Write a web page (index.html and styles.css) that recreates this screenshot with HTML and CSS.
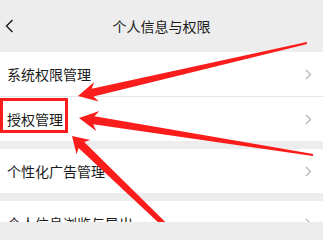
FILE: index.html
```html
<!DOCTYPE html>
<html lang="zh-CN">
<head>
<meta charset="utf-8">
<title>个人信息与权限</title>
<link rel="stylesheet" href="styles.css">
</head>
<body>
<div class="page">
  <header class="nav">
    <span class="back">
      <svg width="10" height="14" viewBox="0 0 10 14"><path d="M7.5 1 L1.5 7 L7.5 13" fill="none" stroke="#1a1a1a" stroke-width="1.4"/></svg>
    </span>
    <h1 class="title">个人信息与权限</h1>
    <span class="spacer"></span>
  </header>

  <section class="group">
    <div class="row"><span class="label">系统权限管理</span><svg class="chev" width="7" height="11" viewBox="0 0 7 11"><path d="M1 1 L5.5 5.5 L1 10" fill="none" stroke="#b2b2b2" stroke-width="1.2"/></svg></div>
    <div class="row divided"><span class="label">授权管理</span><svg class="chev" width="7" height="11" viewBox="0 0 7 11"><path d="M1 1 L5.5 5.5 L1 10" fill="none" stroke="#b2b2b2" stroke-width="1.2"/></svg></div>
  </section>

  <section class="group">
    <div class="row"><span class="label">个性化广告管理</span><svg class="chev" width="7" height="11" viewBox="0 0 7 11"><path d="M1 1 L5.5 5.5 L1 10" fill="none" stroke="#b2b2b2" stroke-width="1.2"/></svg></div>
  </section>

  <section class="group">
    <div class="row"><span class="label">个人信息浏览与导出</span><svg class="chev" width="7" height="11" viewBox="0 0 7 11"><path d="M1 1 L5.5 5.5 L1 10" fill="none" stroke="#b2b2b2" stroke-width="1.2"/></svg></div>
  </section>

  <svg class="annot" width="323" height="222" viewBox="0 0 323 222">
    <rect x="1.5" y="99.5" width="65" height="32" fill="none" stroke="#fb1c1c" stroke-width="3"/>
    <polygon fill="#fb1c1c" points="78,96 98.8,101.4 93.5,96.5 307.2,44 306.8,42 91.7,88.7 94.2,82"/>
    <polygon fill="#fb1c1c" points="79,118 96.2,130.9 93.2,124.3 312.8,156 313.2,154 94.4,116.3 99.4,111.1"/>
    <polygon fill="#fb1c1c" points="72,136 76.6,154.3 78.6,147.9 251.7,309.9 253.1,308.5 84.2,142.1 90.4,139.9"/>
  </svg>
</div>
</body>
</html>
```

FILE: styles.css
```css
html, body {
  margin: 0;
  padding: 0;
}
body {
  background: #ededed;
  font-family: "Noto Sans CJK SC", "Noto Sans", sans-serif;
  color: #191919;
}
.page {
  position: relative;
  width: 323px;
  height: 222px;
  overflow: hidden;
  background: #ededed;
}
.nav {
  height: 52px;
  display: grid;
  grid-template-columns: 40px 1fr 40px;
  align-items: center;
}
.back {
  display: flex;
  align-items: center;
  padding-left: 5px;
  height: 14px;
}
.back svg {
  display: block;
}
.title {
  margin: 0;
  font-size: 14px;
  font-weight: 400;
  text-align: center;
  line-height: 20px;
  color: #1a1a1a;
}
.group {
  background: #ffffff;
  margin-bottom: 8px;
}
.row {
  height: 44px;
  display: flex;
  align-items: center;
  justify-content: space-between;
  padding: 0 11px 0 7px;
}
.row.divided {
  border-top: 1px solid #e6e6e6;
}
.label {
  font-size: 14px;
  line-height: 20px;
}
.chev {
  display: block;
}
.annot {
  position: absolute;
  left: 0;
  top: 0;
  pointer-events: none;
}
```
